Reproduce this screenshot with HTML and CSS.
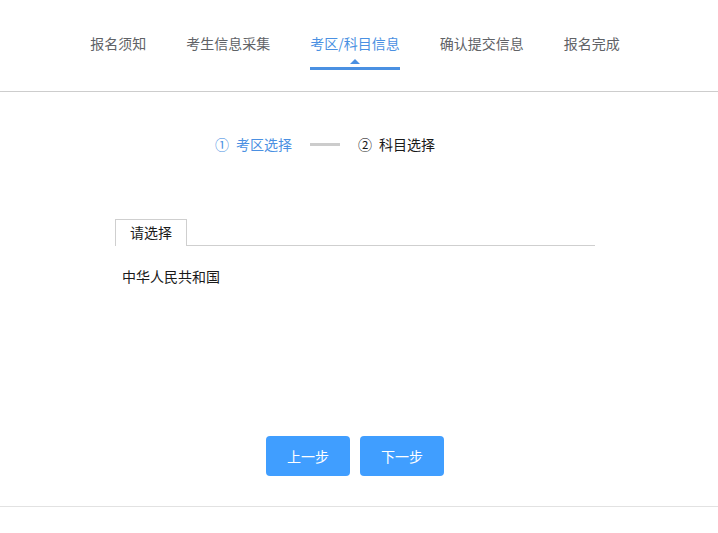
FILE: index.html
```html
<!DOCTYPE html>
<html lang="zh-CN">
<head>
<meta charset="utf-8">
<title>考区/科目信息</title>
<link rel="stylesheet" href="styles.css">
</head>
<body>
<div class="page">
  <header class="header">
    <nav class="nav">
      <div class="nav-item"><span class="nav-text">报名须知</span><span class="caret"></span><span class="bar"></span></div>
      <div class="nav-item"><span class="nav-text">考生信息采集</span><span class="caret"></span><span class="bar"></span></div>
      <div class="nav-item active"><span class="nav-text">考区/科目信息</span><span class="caret"></span><span class="bar"></span></div>
      <div class="nav-item"><span class="nav-text">确认提交信息</span><span class="caret"></span><span class="bar"></span></div>
      <div class="nav-item"><span class="nav-text">报名完成</span><span class="caret"></span><span class="bar"></span></div>
    </nav>
  </header>
  <main class="main">
    <div class="container">
      <div class="steps">
        <span class="step current"><span class="step-num">①</span>考区选择</span>
        <span class="step-line"></span>
        <span class="step"><span class="step-num">②</span>科目选择</span>
      </div>
      <div class="tabs">
        <div class="tab">请选择</div>
        <div class="tab-fill"></div>
      </div>
      <div class="option">中华人民共和国</div>
      <div class="actions">
        <button class="btn">上一步</button>
        <button class="btn">下一步</button>
      </div>
    </div>
  </main>
</div>
</body>
</html>
```
FILE: styles.css
```css
* { box-sizing: border-box; }
html, body { margin: 0; padding: 0; background: #fff; }
body {
  font-family: "Noto Sans CJK SC", "Liberation Sans", sans-serif;
  font-size: 14px;
  color: #1a1a1a;
}
.page { padding-right: 8px; }
.header {
  padding: 33px 8px 21px 0;
  border-bottom: 1px solid #cfcfcf;
  margin-right: -8px;
}
.nav {
  display: flex;
  justify-content: center;
  gap: 40px;
}
.nav-item {
  display: flex;
  flex-direction: column;
  align-items: center;
}
.nav-text {
  line-height: 20px;
  color: #606266;
  white-space: nowrap;
}
.caret {
  margin-top: 6px;
  width: 0;
  height: 0;
  border-left: 5px solid transparent;
  border-right: 5px solid transparent;
  border-bottom: 5px solid transparent;
}
.bar {
  margin-top: 3px;
  height: 3px;
  align-self: stretch;
  background: transparent;
}
.nav-item.active .nav-text { color: #4a90e2; }
.nav-item.active .caret { border-bottom-color: #4a90e2; }
.nav-item.active .bar { background: #4a90e2; }

.main {
  margin-right: -8px;
  padding-right: 8px;
  padding-bottom: 30px;
  border-bottom: 1px solid #e2e2e2;
  box-shadow: 0 2px 4px rgba(0, 0, 0, 0.08);
}
.container {
  width: 480px;
  margin: 0 auto;
}
.steps {
  display: flex;
  align-items: center;
  padding-left: 100px;
  padding-top: 42px;
  line-height: 20px;
}
.step {
  display: flex;
  align-items: center;
  white-space: nowrap;
}
.step-num {
  display: inline-block;
  width: 13px;
  margin-right: 8px;
  text-align: center;
}
.step.current { color: #4a90e2; }
.step-line {
  width: 30px;
  height: 3px;
  background: #cccccc;
  margin: 0 18px;
}
.tabs {
  display: flex;
  margin-top: 65px;
}
.tab {
  border: 1px solid #cfcfcf;
  border-bottom: none;
  padding: 0 14px;
  line-height: 25px;
  height: 27px;
}
.tab-fill {
  flex: 1;
  border-bottom: 1px solid #cfcfcf;
}
.option {
  margin-top: 20px;
  padding-left: 7px;
  line-height: 20px;
}
.actions {
  display: flex;
  justify-content: center;
  gap: 10px;
  margin-top: 150px;
}
.btn {
  width: 84px;
  height: 40px;
  border: none;
  border-radius: 4px;
  background: #409eff;
  color: #fff;
  font-family: inherit;
  font-size: 14px;
  padding: 0;
}
```
